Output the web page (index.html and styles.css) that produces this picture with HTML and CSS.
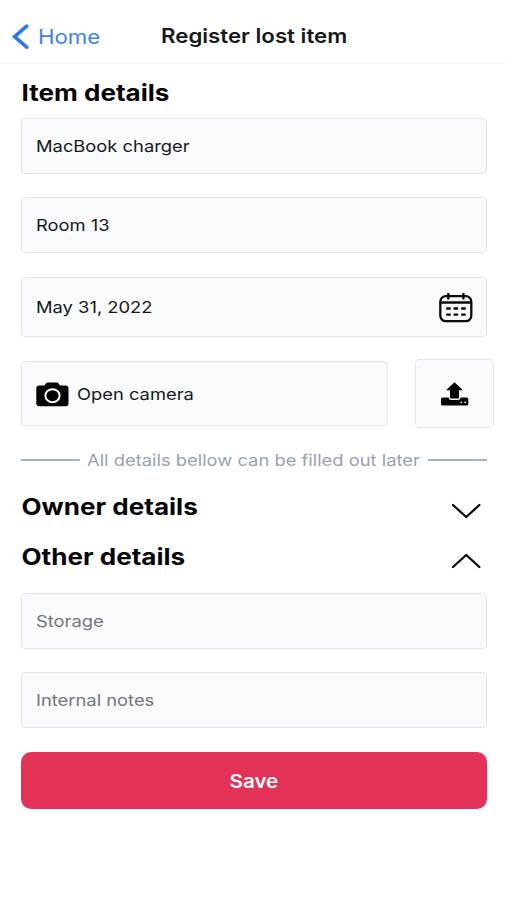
FILE: index.html
```html
<!DOCTYPE html>
<html lang="en">
<head>
<meta charset="utf-8">
<title>Register lost item</title>
<link rel="stylesheet" href="styles.css">
</head>
<body>
<header class="nav">
  <a class="back" href="#">
    <svg class="back-icon" width="18" height="26" viewBox="0 0 18 26"><path d="M14.700 2.200 2.600 12.700l12.100 10.500"/></svg>
    <span class="wide">Home</span>
  </a>
  <h1 class="wide title">Register lost item</h1>
</header>
<main class="form">
  <h2 class="heading"><span class="wide">Item details</span></h2>
  <div class="field first"><span class="wide">MacBook charger</span></div>
  <div class="field"><span class="wide">Room 13</span></div>
  <div class="field date">
    <span class="wide">May 31, 2022</span>
    <svg class="calendar" width="34" height="31" viewBox="0 0 34 31">
      <rect x="1.300" y="4.200" width="31" height="25" rx="5.500"/>
      <path d="M1.500 10.500h31M9.300 1v6.600M24.400 1v6.600"/>
      <path class="days" d="M7.200 16.500h4.500M14.600 16.500h4.500M22.200 16.500h4.500M7.200 22.700h4.500M14.600 22.700h4.500M22.200 22.700h4.500"/>
    </svg>
  </div>
  <div class="photo">
    <button class="camera">
      <svg width="34" height="25" viewBox="0 0 34 25">
        <path d="M3.300 3.500h5.200l1.200-1.800Q10.500.5 12 .5h8.500q1.500 0 2.300 1.200L24 3.500h5.500q3 0 3 3v14.700q0 3-3 3H3.300q-3 0-3-3V6.500q0-3 3-3Z"/>
        <ellipse class="lens" cx="16.500" cy="13.700" rx="7.100" ry="6.500"/>
      </svg>
      <span class="wide">Open camera</span>
    </button>
    <button class="upload" aria-label="Upload">
      <svg width="28" height="24" viewBox="0 0 28 24">
        <path d="M13.500.3 22 8.300h-4v7q0 1.200-1.200 1.200h-6.600q-1.200 0-1.200-1.200v-7H5Z"/>
        <path d="M2 15.500h5.600q.3 2.500 2.600 2.500h6.600q2.300 0 2.600-2.500H25.500q1.800 0 1.800 1.500v4.900q0 1.500-1.800 1.500H1.800Q0 23.400 0 21.900V17q0-1.500 2-1.500Z"/>
        <circle class="led" cx="20.300" cy="20.300" r=".9"/><circle class="led" cx="24.200" cy="20.300" r=".9"/>
      </svg>
    </button>
  </div>
  <div class="divider"><span class="wide">All details bellow can be filled out later</span></div>
  <h2 class="heading section"><span class="wide">Owner details</span>
    <svg class="chevron" width="30" height="16" viewBox="0 0 30 16"><path d="m2 2 13.200 12L28.400 2"/></svg>
  </h2>
  <h2 class="heading section"><span class="wide">Other details</span>
    <svg class="chevron" width="30" height="16" viewBox="0 0 30 16"><path d="m2 14 13.200-12L28.400 14"/></svg>
  </h2>
  <div class="field muted storage"><span class="wide">Storage</span></div>
  <div class="field muted"><span class="wide">Internal notes</span></div>
  <button class="save"><span class="wide">Save</span></button>
</main>
</body>
</html>
```
FILE: styles.css
```css
* { box-sizing: border-box; }
body { margin: 0; background: #fff; color: #17181a; font-family: Inter, "Liberation Sans", sans-serif; font-size: 16.5px; }
.wide { display: inline-block; white-space: nowrap; transform: scaleX(1.112); transform-origin: left center; }
.nav { height: 64px; padding-top: 10px; border-bottom: 1px solid #f6f6f7; display: grid; grid-template-columns: 160.500px 1fr; align-items: center; }
.back { display: flex; align-items: center; gap: 8px; padding-left: 12px; color: #3f7ff0; text-decoration: none; font-size: 20px; }
.back-icon path { fill: none; stroke: #2f76ee; stroke-width: 3.600; stroke-linecap: round; }
.title { margin: 0 0 1px; font-size: 20px; font-weight: 600; justify-self: start; }
.form { padding: 0 20px 0 21px; }
.heading { margin: 0; height: 54px; padding-top: 3px; display: flex; align-items: center; font-size: 23px; line-height: 30px; font-weight: 700; color: #050505; }
.heading .wide { transform: translateX(0.5px) scaleX(1.133); }
.field { height: 56px; margin-bottom: 24px; padding: 0 14px; border: 1.500px solid #e2e6ec; border-radius: 4px; background: #f8fafc; display: flex; align-items: center; justify-content: space-between; }
.first { margin-bottom: 23px; }
.date { height: 60px; margin-bottom: 22px; padding-right: 13px; }
.calendar { fill: none; stroke: #0b0b0b; stroke-width: 2.300; }
.photo { display: flex; align-items: center; justify-content: space-between; height: 69px; margin-right: -7px; }
button { font: inherit; color: inherit; border: 1.500px solid #e2e6ec; background: #f8fafc; border-radius: 4px; }
.camera { width: 367px; height: 65px; padding: 0 14px; display: flex; align-items: center; gap: 7px; }
.camera svg { margin-top: 1px; }
.camera svg, .upload svg { fill: #030303; }
.camera .lens { stroke: #f8fafc; stroke-width: 2; }
.upload { width: 79px; height: 69px; padding: 0; display: grid; place-items: center; }
.upload .led { fill: #f8fafc; }
.divider { display: grid; grid-template-columns: 59px 1fr 59px; align-items: center; gap: 6.500px; height: 30px; margin: 17px 0 6px; color: #98a2b0; }
.divider::before, .divider::after { content: ""; height: 1.500px; background: #a4b4c1; }
.section { height: 50px; padding: 1px 6px 0 0; justify-content: space-between; }
.chevron { margin-top: 9px; }
.chevron path { fill: none; stroke: #0b0b0b; stroke-width: 2.300; stroke-linecap: round; }
.muted { color: #73777f; }
.storage { margin: 12px 0 23px; }
.save { display: block; width: 100%; height: 57px; border: 0; border-radius: 10px; background: #e33157; color: #fff; font-size: 18.500px; font-weight: 600; }
.save .wide { transform-origin: center; }
```
